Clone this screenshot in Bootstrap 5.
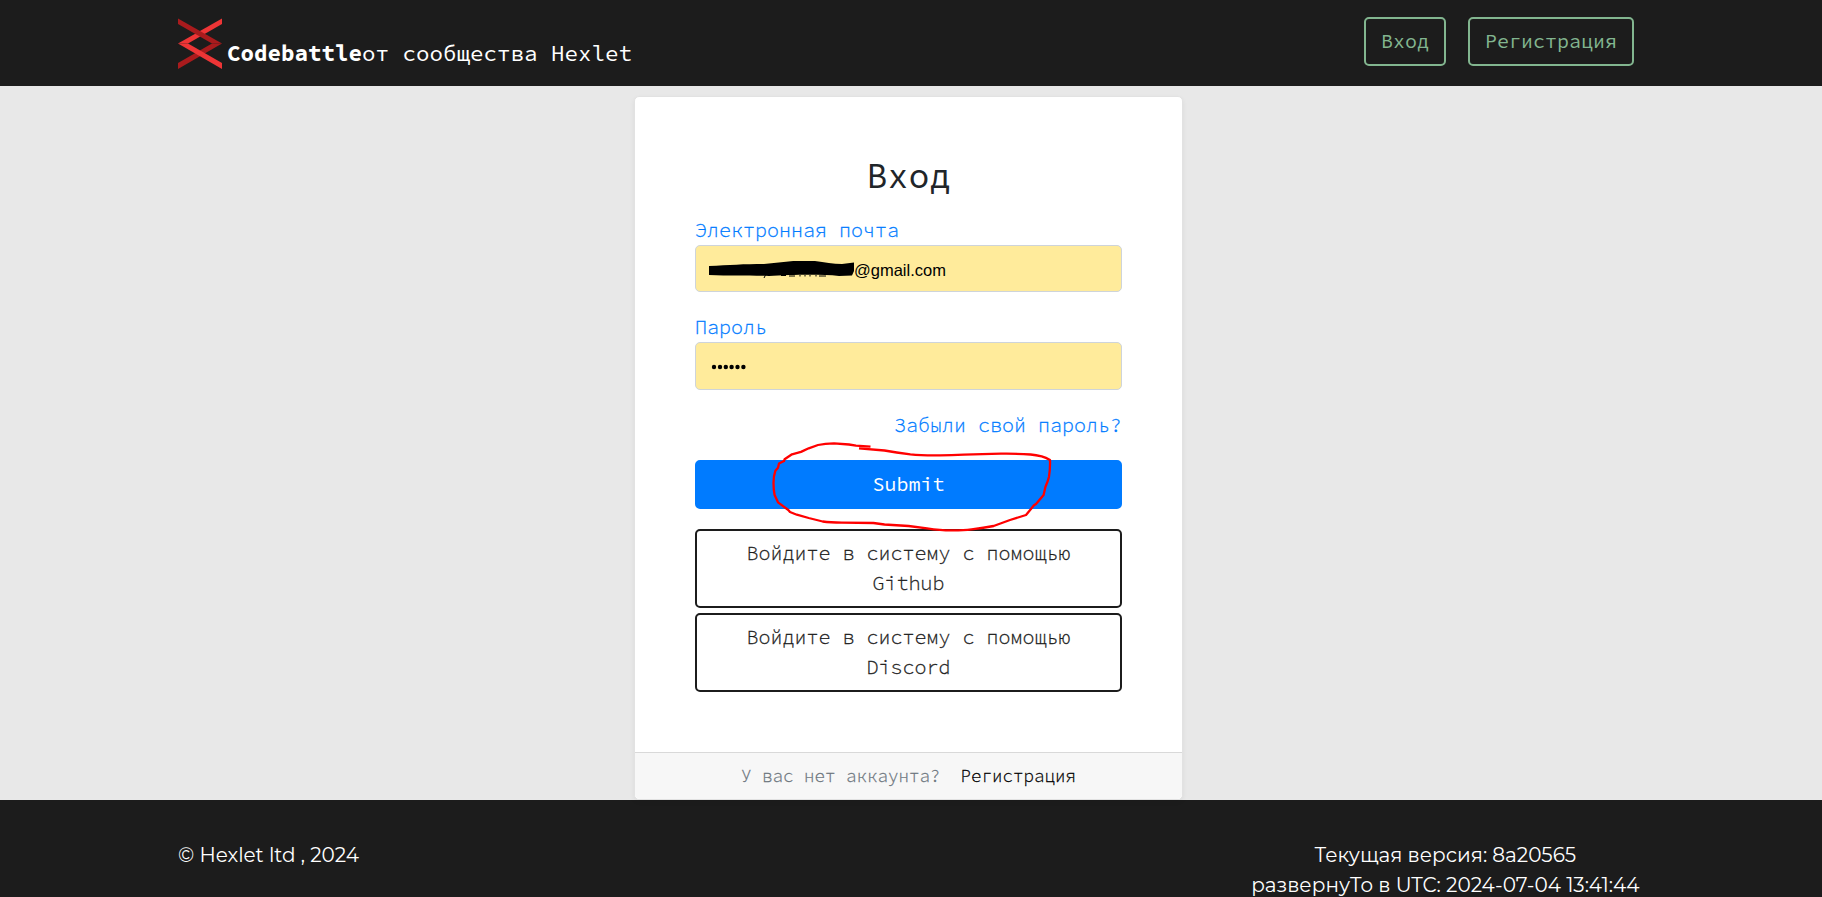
<!DOCTYPE html>
<html lang="ru">
<head>
<meta charset="utf-8">
<title>Codebattle</title>
<link href="https://cdn.jsdelivr.net/npm/bootstrap@5.3.0/dist/css/bootstrap.min.css" rel="stylesheet">
<style>
html{overflow:hidden}
body{background:#e8e8e8;font-family:"Source Code Pro","DejaVu Sans Mono",monospace;font-size:20px;line-height:30px;color:#212529;height:897px;overflow:hidden}
a{text-decoration:none}
.site-wrap{width:1466px;margin:0 auto}
.bar-dark{background:#1c1c1c}
.site-head{height:86px}
.brand-text{font-size:22.5px;line-height:30px;padding-top:22px;margin-left:5px}
.btn{--bs-btn-font-size:20px;--bs-btn-line-height:30px;--bs-btn-border-width:2px;--bs-btn-border-radius:5px}
.btn-head{--bs-btn-color:#82b58f;--bs-btn-border-color:#82b58f;padding:7px 15px;height:49px}
.login-card{width:549px;height:704px;margin-top:10px;border:1px solid #e2e2e2;border-radius:5px;box-shadow:0 2px 5px rgba(0,0,0,.06)}
.login-body{padding:60px 60px 0}
.login-title{font-size:35px;line-height:42px;font-weight:400;margin:-2px 0 12px}
.link-blue{color:#007bff;font-weight:300;-webkit-text-stroke:.3px}
.field{height:47px;background:#ffeb9b;border:1px solid #ced4da;border-radius:5px;font-family:"Liberation Sans",sans-serif;font-size:16.5px;font-weight:400;color:#000;padding:2px 13px 0}
.btn-send{--bs-btn-color:#fff;--bs-btn-bg:#007bff;--bs-btn-border-color:#007bff;height:49px;padding:6px 7px 7px}
.btn-social{--bs-btn-color:#1c1c1c;--bs-btn-border-color:#1c1c1c;--bs-btn-font-weight:300;-webkit-text-stroke:.3px;height:79px;padding:7px 40px}
.login-foot{height:47px;background:#f7f7f7;border-top:1px solid #d9d9d9;font-size:17.5px;font-weight:300;-webkit-text-stroke:.3px;border-radius:0 0 5px 5px}
.site-foot{height:97px;font-family:Montserrat,Inter,sans-serif;font-size:20px;color:#fff;padding-top:40px}
.ring{left:75px;top:-20px;pointer-events:none}
</style>
</head>
<body>
<header class="bar-dark site-head">
  <div class="site-wrap d-flex justify-content-between">
    <div class="d-flex align-items-start text-white">
      <svg width="44" height="51" viewBox="0 0 44 51" style="margin-top:18px">
        <path d="M44 0.5V6L10 25.5H0Z" fill="#ee3536"/>
        <path d="M0 0.5V6L34 25.5H44Z" fill="#a91b1d"/>
        <path d="M44 25.5H34L0 45V51Z" fill="#a91b1d"/>
        <path d="M0 25.5H10L44 45V51Z" fill="#ee3536"/>
      </svg>
      <div class="brand-text" style="margin-top:16px"><b>Codebattle</b>от сообщества Hexlet</div>
    </div>
    <nav class="d-flex" style="padding:17px 10px 0 0;gap:22px">
      <a class="btn btn-head" href="#">Вход</a>
      <a class="btn btn-head" href="#">Регистрация</a>
    </nav>
  </div>
</header>
<main class="d-flex justify-content-center" style="height:714px;padding-right:5px">
  <section class="login-card bg-white d-flex flex-column justify-content-between">
    <form class="login-body">
      <h3 class="login-title text-center">Вход</h3>
      <div class="link-blue" style="padding-top:6px;height:36px"><label>Электронная почта</label></div>
      <div class="field d-flex align-items-center mt-0">
        <svg width="145" height="18" viewBox="0 0 145 18" class="flex-shrink-0"><path d="M0 5C20 4 35 3 55 3C70 2 85 -1 99 -.5C112 0 122 3 133 3L145 1.5V10L143 14.5L130 15C110 13 80 14 60 15C35 14 20 15 0 14Z" fill="#000"/><path d="M57 13l-2 4M72 14.5h5M80 15h6M91 14v1.5M96 14v1.5M101 14v1.5M107 14v1.5M110 15h7" stroke="#000" fill="none"/></svg>
        <span>@gmail.com</span>
      </div>
      <div class="link-blue" style="margin-top:20px;height:30px"><label>Пароль</label></div>
      <div class="field d-flex align-items-center" style="height:48px">
        <svg width="38" height="6" viewBox="0 0 38 6" fill="#000"><circle cx="5" cy="3" r="2.2"/><circle cx="11" cy="3" r="2.2"/><circle cx="16.8" cy="3" r="2.2"/><circle cx="22.6" cy="3" r="2.2"/><circle cx="28.5" cy="3" r="2.2"/><circle cx="34.4" cy="3" r="2.2"/></svg>
      </div>
      <div class="text-end" style="padding-top:20px;height:70px"><a class="link-blue" href="#">Забыли свой пароль?</a></div>
      <div class="position-relative">
        <button type="button" class="btn btn-send w-100 d-block">Submit</button>
        <svg class="ring position-absolute" width="284" height="94" viewBox="770 440 284 94" fill="none" stroke="#f00" stroke-width="2.3" stroke-linejoin="round">
          <path d="M870.5 446.7L856 445.6L849 444.5L834 443.3Q825 443.5 818 445L808.7 448.3L801 451.9L792 454.3L784.6 459.3L784 461L779 463.5L778 467.7L775.4 470.7Q773.5 476 773.5 483Q773.5 490 774.6 495L778 502.3L788.3 510L790 512L796.8 514.7L808.7 518L822.7 521.5Q830 522.6 842 522.7L873.4 523L884.5 524.5L908.6 526L927 528.3Q942 530.5 953 530.3Q964 530.3 971.5 529.3Q984 528 993.6 526L1010 520L1026 515L1034 505.3L1036 504L1043.6 495L1045.4 487Q1048 481 1049 476.7Q1050.3 468 1050 460Q1046 457.5 1041.7 456.3Q1036 455 1030.6 454.5Q1018 453.5 1001 453.7L964 454.7Q948 455.5 934.5 455.3Q920 455.2 910.4 454.3Q896 452.5 884.5 450.5L859 448.3"/>
        </svg>
      </div>
      <a class="btn btn-social w-100 d-block" style="margin-top:20px" href="#">Войдите в систему с помощью Github</a>
      <a class="btn btn-social w-100 d-block" style="margin-top:5px" href="#">Войдите в систему с помощью Discord</a>
    </form>
    <div class="login-foot d-flex justify-content-center align-items-center" style="gap:20px">
      <span style="color:#6c757d">У вас нет аккаунта?</span><a class="text-black" href="#">Регистрация</a>
    </div>
  </section>
</main>
<footer class="bar-dark site-foot">
  <div class="site-wrap d-flex justify-content-between">
    <div>© Hexlet ltd , 2024</div>
    <div class="text-center text-nowrap" style="padding-right:4.5px">Текущая версия: 8a20565<br>развернуTo в UTC: 2024-07-04 13:41:44</div>
  </div>
</footer>
<script src="https://cdn.jsdelivr.net/npm/bootstrap@5.3.0/dist/js/bootstrap.bundle.min.js"></script>
</body>
</html>
